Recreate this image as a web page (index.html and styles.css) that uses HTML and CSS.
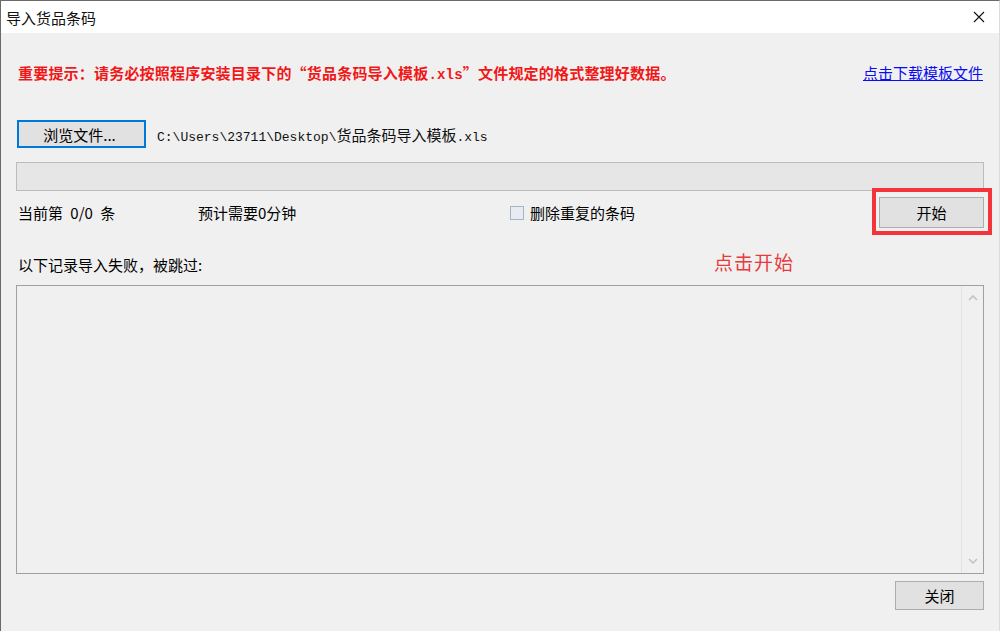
FILE: index.html
```html
<!DOCTYPE html>
<html lang="zh-CN">
<head>
    <meta charset="UTF-8">
    <title>导入货品条码</title>
    <link rel="stylesheet" href="styles.css">
</head>
<body>
    <div class="window">
        <header class="titlebar">
            <span class="title">导入货品条码</span>
            <svg class="close-x" width="12" height="12" viewBox="0 0 12 12">
                <path d="M1 1 L11 11 M11 1 L1 11" stroke="#111" stroke-width="1.1" fill="none"/>
            </svg>
        </header>

        <main class="content">
            <div class="notice-row">
                <p class="notice">重要提示：请务必按照程序安装目录下的“货品条码导入模板<span class="mono">.xls</span>”文件规定的格式整理好数据。</p>
                <a href="#" class="download-link">点击下载模板文件</a>
            </div>

            <div class="file-row">
                <button class="btn btn-focus">浏览文件...</button>
                <span class="file-path">C:\Users\23711\Desktop\<span class="cjk">货品条码导入模板</span>.xls</span>
            </div>

            <div class="progress"></div>

            <div class="status-row">
                <span class="spaced">当前第 0/0 条</span>
                <span>预计需要0分钟</span>
                <label class="check">
                    <span class="check-box"></span>
                    删除重复的条码
                </label>
                <div class="start-wrap">
                    <button class="btn btn-start">开始</button>
                    <div class="highlight"></div>
                </div>
            </div>

            <div class="fail-row">
                <span>以下记录导入失败，被跳过:</span>
                <span class="hint">点击开始</span>
            </div>

            <div class="log-box">
                <div class="log-area"></div>
                <div class="scrollbar">
                    <svg width="10" height="6" viewBox="0 0 10 6"><path d="M1 5 L5 1 L9 5" stroke="#c2c2c2" stroke-width="1.6" fill="none"/></svg>
                    <svg width="10" height="6" viewBox="0 0 10 6"><path d="M1 1 L5 5 L9 1" stroke="#c2c2c2" stroke-width="1.6" fill="none"/></svg>
                </div>
            </div>

            <div class="footer-row">
                <button class="btn btn-close">关闭</button>
            </div>
        </main>
    </div>
</body>
</html>
```

FILE: styles.css
```css
* {
    margin: 0;
    padding: 0;
    box-sizing: border-box;
}

body {
    width: 1000px;
    height: 631px;
    overflow: hidden;
    background: #f0f0f0;
    font-family: "Noto Sans CJK SC", "Liberation Sans", sans-serif;
    font-size: 15px;
    color: #000;
}

.window {
    height: 631px;
    border-left: 1px solid #6a6a6a;
    border-top: 1px solid #6a6a6a;
    border-right: 1px solid #dcdcdc;
    background: #f0f0f0;
}

/* Title bar */
.titlebar {
    height: 32px;
    background: #fff;
    display: flex;
    align-items: center;
    justify-content: space-between;
    padding: 0 14px 0 5px;
}

.title {
    font-size: 15px;
    color: #111;
}

/* Content */
.content {
    padding: 0 15px 0 15px;
}

.notice-row {
    display: flex;
    justify-content: space-between;
    align-items: center;
    height: 20px;
    margin-top: 29px;
    padding-left: 2px;
}

.notice {
    color: #f01818;
    font-weight: bold;
    font-size: 15px;
    letter-spacing: 0.2px;
}

.mono {
    font-family: "Liberation Mono", monospace;
    font-size: 14px;
}

.download-link {
    color: #0b0bf0;
    font-size: 15px;
    text-decoration: underline;
    margin-right: 1px;
}

.file-row {
    display: flex;
    align-items: center;
    gap: 11px;
    margin-top: 38px;
    padding-left: 1px;
}

.btn {
    font-family: "Noto Sans CJK SC", "Liberation Sans", sans-serif;
    font-size: 15px;
    color: #000;
    background: #e1e1e1;
    border: 1px solid #adadad;
}

.btn-focus {
    width: 129px;
    height: 28px;
    border: 2px solid #0078d7;
    padding-right: 4px;
}

.file-path {
    font-family: "Liberation Mono", "Noto Sans CJK SC", monospace;
    font-size: 13px;
    color: #111;
}

.file-path .cjk {
    font-family: "Noto Sans CJK SC", sans-serif;
    font-size: 15px;
}

.progress {
    height: 29px;
    margin-top: 14px;
    background: #e6e6e6;
    border: 1px solid #bcbcbc;
}

.status-row {
    display: grid;
    grid-template-columns: 180px 312px 1fr 105px;
    align-items: center;
    height: 31px;
    margin-top: 6px;
    padding-left: 2px;
}

.spaced {
    word-spacing: 4px;
}

.check {
    display: flex;
    align-items: center;
    gap: 6px;
}

.check-box {
    width: 14px;
    height: 14px;
    border: 1px solid #a6b4c8;
    background: #e8ebf0;
}

.start-wrap {
    position: relative;
    height: 31px;
}

.btn-start {
    width: 105px;
    height: 31px;
}

.highlight {
    position: absolute;
    left: -7px;
    top: -9px;
    width: 120px;
    height: 47px;
    border: 4px solid #f5333a;
}

.fail-row {
    position: relative;
    height: 20px;
    margin-top: 27px;
    padding-left: 2px;
    line-height: 20px;
}

.hint {
    position: absolute;
    left: 698px;
    top: -3px;
    color: #e8393c;
    font-size: 19px;
    letter-spacing: 1px;
}

.log-box {
    display: flex;
    height: 289px;
    margin-top: 10px;
    border: 1px solid #a0a0a0;
    background: #f0f0f0;
}

.log-area {
    flex: 1;
}

.scrollbar {
    width: 22px;
    border-left: 1px solid #e2e2e2;
    display: flex;
    flex-direction: column;
    justify-content: space-between;
    align-items: center;
    padding: 9px 0 9px;
}

.footer-row {
    display: flex;
    justify-content: flex-end;
    margin-top: 7px;
}

.btn-close {
    width: 89px;
    height: 29px;
}
```
